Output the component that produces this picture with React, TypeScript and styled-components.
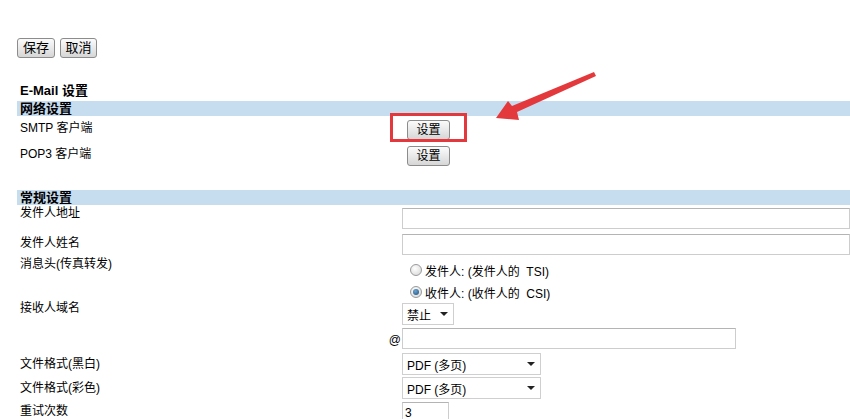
import React from "react";
import styled, { createGlobalStyle } from "styled-components";

const Global = createGlobalStyle`
  html, body {
    margin: 0;
    padding: 0;
    background: #fff;
  }
  body {
    font-family: "Liberation Sans", "Noto Sans CJK SC", sans-serif;
    font-size: 12px;
    color: #000;
  }
`;

const Page = styled.div`
  position: relative;
  padding: 38px 0 0 17px;
  width: 833px;
  height: 381px;
  overflow: hidden;
`;

const Toolbar = styled.div`
  display: flex;
  gap: 5px;
  height: 20px;
`;

const Btn = styled.button<{ $w: number; $fs?: number }>`
  width: ${(p) => p.$w}px;
  height: 20px;
  padding: 0;
  border: 1px solid #8c8c8c;
  border-radius: 3px;
  background: linear-gradient(#fbfbfb, #e9e9e9 50%, #d6d6d6);
  font-family: "Liberation Sans", "Noto Sans CJK SC", sans-serif;
  font-size: ${(p) => p.$fs ?? 12}px;
  line-height: 16px;
  color: #000;
`;

const Title = styled.div`
  margin-top: 24px;
  height: 19px;
  line-height: 18px;
  padding-left: 3px;
  font-size: 13px;
  font-weight: bold;
`;

const SectionBar = styled.div`
  height: 15px;
  line-height: 15px;
  padding-left: 3px;
  background: #c6dcef;
  font-size: 13px;
  font-weight: bold;
`;

const Spacer = styled.div<{ $h: number }>`
  height: ${(p) => p.$h}px;
`;

const Row = styled.div<{ $h: number }>`
  display: grid;
  grid-template-columns: 385px 1fr;
  align-items: start;
  height: ${(p) => p.$h}px;
`;

const Label = styled.div<{ $pad: number; $right?: boolean }>`
  padding: ${(p) => p.$pad}px ${(p) => (p.$right ? "1px" : "0")} 0 3px;
  line-height: 14px;
  text-align: ${(p) => (p.$right ? "right" : "left")};
  white-space: nowrap;
`;

const Value = styled.div<{ $mt: number }>`
  position: relative;
  padding-top: ${(p) => p.$mt}px;
`;

const SetBtn = styled(Btn)`
  margin-left: 5px;
`;

const TextInput = styled.input<{ $w?: number }>`
  display: block;
  box-sizing: border-box;
  width: ${(p) => (p.$w ? `${p.$w}px` : "100%")};
  height: 21px;
  margin: 0;
  padding: 0 2px;
  border: 1px solid #cdcdcd;
  border-top-color: #b4b4b4;
  font-family: "Liberation Sans", "Noto Sans CJK SC", sans-serif;
  font-size: 12px;
  color: #000;
  outline: none;
`;

const SelectBox = styled.div<{ $w: number }>`
  display: flex;
  align-items: center;
  justify-content: space-between;
  box-sizing: border-box;
  width: ${(p) => p.$w}px;
  height: 22px;
  padding: 0 5px 0 4px;
  border: 1px solid #cfcfcf;
  background: #fff;
  font-size: 12px;
`;

const Caret = styled.span`
  width: 0;
  height: 0;
  border-left: 4px solid transparent;
  border-right: 4px solid transparent;
  border-top: 4px solid #222;
`;

const RadioLine = styled.label`
  display: flex;
  align-items: center;
  gap: 3px;
  height: 22px;
  padding-left: 8px;
  white-space: pre;
`;

const RadioDot = styled.span<{ $on?: boolean }>`
  position: relative;
  box-sizing: border-box;
  width: 12px;
  height: 12px;
  border-radius: 50%;
  border: 1px solid #9a9a9a;
  background: radial-gradient(circle at 40% 35%, #ffffff, #d4d4d4);
  &::after {
    content: "";
    display: ${(p) => (p.$on ? "block" : "none")};
    position: absolute;
    left: 2px;
    top: 2px;
    width: 6px;
    height: 6px;
    border-radius: 50%;
    background: radial-gradient(circle at 40% 35%, #6aa3d0, #1d4f7c);
  }
`;

const Highlight = styled.div`
  position: absolute;
  left: -12px;
  top: -3px;
  width: 77px;
  height: 29px;
  box-sizing: border-box;
  border: 3px solid #e4393c;
  pointer-events: none;
`;

const Arrow = styled.svg`
  position: absolute;
  left: 490px;
  top: 66px;
`;

export default function App() {
  return (
    <>
      <Global />
      <Page>
        <Toolbar>
          <Btn $w={38} $fs={13}>保存</Btn>
          <Btn $w={37} $fs={13}>取消</Btn>
        </Toolbar>

        <Title>E-Mail 设置</Title>
        <SectionBar>网络设置</SectionBar>

        <Row $h={26}>
          <Label $pad={5}>SMTP 客户端</Label>
          <Value $mt={4}>
            <SetBtn $w={43}>设置</SetBtn>
            <Highlight />
          </Value>
        </Row>
        <Row $h={26}>
          <Label $pad={5}>POP3 客户端</Label>
          <Value $mt={4}>
            <SetBtn $w={43}>设置</SetBtn>
          </Value>
        </Row>

        <Spacer $h={22} />
        <SectionBar>常规设置</SectionBar>

        <Row $h={26}>
          <Label $pad={1}>发件人地址</Label>
          <Value $mt={3}>
            <TextInput />
          </Value>
        </Row>
        <Row $h={26}>
          <Label $pad={5}>发件人姓名</Label>
          <Value $mt={3}>
            <TextInput />
          </Value>
        </Row>
        <Row $h={44}>
          <Label $pad={0}>消息头(传真转发)</Label>
          <Value $mt={2}>
            <RadioLine>
              <RadioDot />
              发件人: (发件人的  TSI)
            </RadioLine>
            <RadioLine>
              <RadioDot $on />
              收件人: (收件人的  CSI)
            </RadioLine>
          </Value>
        </Row>
        <Row $h={25}>
          <Label $pad={0}>接收人域名</Label>
          <Value $mt={2}>
            <SelectBox $w={52}>
              禁止 <Caret />
            </SelectBox>
          </Value>
        </Row>
        <Row $h={25}>
          <Label $pad={7} $right>
            @
          </Label>
          <Value $mt={2}>
            <TextInput $w={334} />
          </Value>
        </Row>
        <Row $h={25}>
          <Label $pad={6}>文件格式(黑白)</Label>
          <Value $mt={2}>
            <SelectBox $w={139}>
              PDF (多页) <Caret />
            </SelectBox>
          </Value>
        </Row>
        <Row $h={24}>
          <Label $pad={5}>文件格式(彩色)</Label>
          <Value $mt={1}>
            <SelectBox $w={139}>
              PDF (多页) <Caret />
            </SelectBox>
          </Value>
        </Row>
        <Row $h={25}>
          <Label $pad={4}>重试次数</Label>
          <Value $mt={2}>
            <TextInput $w={47} defaultValue="3" />
          </Value>
        </Row>

        <Arrow width="110" height="60" viewBox="490 66 110 60">
          <polygon
            points="496,118 508,101 512,106 594,72 596,76 517,112 519,120"
            fill="#e4393c"
          />
        </Arrow>
      </Page>
    </>
  );
}
